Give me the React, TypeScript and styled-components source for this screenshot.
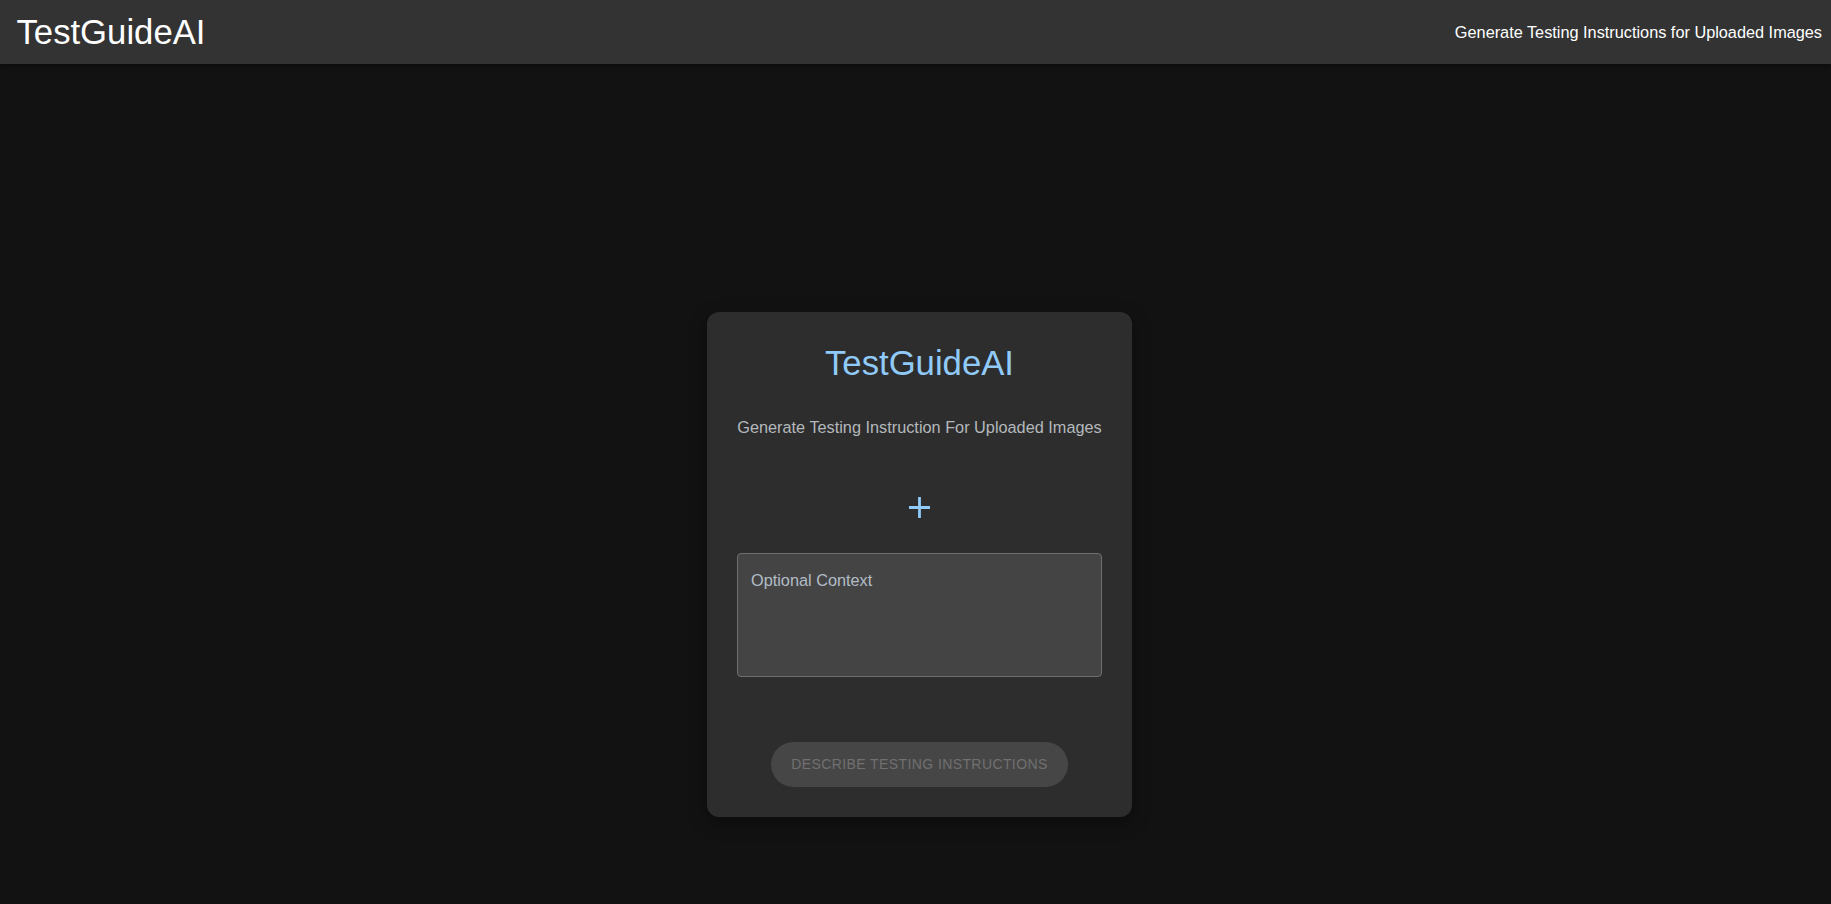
import React from "react";
import styled, { createGlobalStyle } from "styled-components";

const Global = createGlobalStyle`
  html, body { margin: 0; padding: 0; background: #121212; }
  body { font-family: "Liberation Sans", Arial, Helvetica, sans-serif; color: #fff; }
  * { box-sizing: border-box; }
`;

const Page = styled.div`
  min-height: 100vh;
  background: #121212;
  display: flex;
  flex-direction: column;
`;

const Header = styled.header`
  height: 64px;
  background: #333333;
  display: flex;
  align-items: center;
  justify-content: space-between;
  padding: 0 9px 0 16.5px;
  box-shadow: 0 2px 4px rgba(0, 0, 0, 0.3);
`;

const Brand = styled.h1`
  margin: 0;
  font-size: 34.7px;
  font-weight: 400;
  line-height: 1.235;
  color: #ffffff;
`;

const Tagline = styled.div`
  font-size: 16.3px;
  line-height: 1.5;
  color: #ffffff;
`;

const Main = styled.main`
  display: flex;
  justify-content: center;
  padding: 248px 0 0 8px;
`;

const Card = styled.section`
  width: 425px;
  background: #2d2d2d;
  border-radius: 12px;
  padding: 30px;
  display: flex;
  flex-direction: column;
  align-items: center;
  box-shadow: 0 6px 18px rgba(0, 0, 0, 0.35);
`;

const CardTitle = styled.h2`
  margin: 0;
  font-size: 34.7px;
  font-weight: 400;
  line-height: 1.235;
  color: #90caf9;
`;

const Subtitle = styled.p`
  margin: 30.3px 0 0;
  font-size: 16.3px;
  line-height: 1.5;
  color: #b4b8bc;
`;

const AddButton = styled.button`
  margin-top: 55.4px;
  background: none;
  border: none;
  padding: 0;
  width: 25px;
  height: 25px;
  display: flex;
  align-items: center;
  justify-content: center;
  cursor: pointer;
`;

const ContextField = styled.textarea`
  margin-top: 33.3px;
  width: 365px;
  height: 124px;
  resize: none;
  background: #444444;
  border: 1px solid #6e6e6e;
  border-radius: 4px;
  padding: 14.5px 13px;
  font-family: "Liberation Sans", Arial, Helvetica, sans-serif;
  font-size: 16.3px;
  line-height: 23px;
  color: #fff;
  outline: none;
  &::placeholder {
    color: #b2bcc6;
    opacity: 1;
  }
`;

const SubmitButton = styled.button`
  margin-top: 64.7px;
  height: 45px;
  width: 297px;
  border: none;
  border-radius: 23px;
  background: #464646;
  color: #707070;
  font-family: "Liberation Sans", Arial, Helvetica, sans-serif;
  font-size: 14px;
  font-weight: 400;
  letter-spacing: 0.4px;
  text-transform: uppercase;
  display: flex;
  align-items: center;
  justify-content: center;
  padding: 0;
`;

export default function App() {
  return (
    <>
      <Global />
      <Page>
        <Header>
          <Brand>TestGuideAI</Brand>
          <Tagline>Generate Testing Instructions for Uploaded Images</Tagline>
        </Header>
        <Main>
          <Card>
            <CardTitle>TestGuideAI</CardTitle>
            <Subtitle>Generate Testing Instruction For Uploaded Images</Subtitle>
            <AddButton aria-label="Add image">
              <svg width="21" height="21" viewBox="0 0 21 21">
                <path d="M10.5 0 V21 M0 10.5 H21" stroke="#90caf9" strokeWidth="2.8" fill="none" />
              </svg>
            </AddButton>
            <ContextField placeholder="Optional Context" />
            <SubmitButton disabled>Describe Testing Instructions</SubmitButton>
          </Card>
        </Main>
      </Page>
    </>
  );
}
